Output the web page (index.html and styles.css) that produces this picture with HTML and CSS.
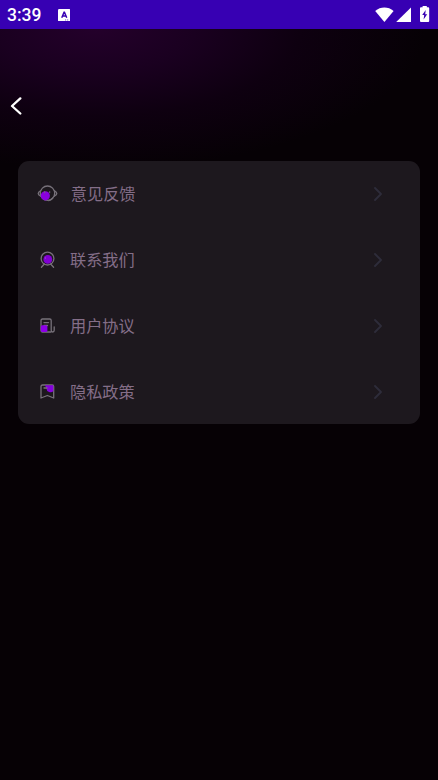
FILE: index.html
```html
<!DOCTYPE html>
<html lang="zh-CN">
<head>
<meta charset="utf-8">
<title>设置</title>
<link rel="stylesheet" href="styles.css">
</head>
<body>
<header class="status">
  <span class="time">3:39</span>
  <svg class="app-badge" viewBox="0 0 12 12"><rect width="12" height="12" rx="1.2" fill="#fff"/><path d="M3.6 8.4 5.8 3h.4l2.2 5.4M4.4 6.8h3.2" fill="none" stroke="#3700b3" stroke-width="1.4"/><path d="M6.8 10.5h1m1 0h1" stroke="#3700b3" stroke-width=".7"/></svg>
  <svg class="signals" viewBox="0 0 56 18" fill="#fff"><path d="M.2 5C5.6.4 13.2.4 18.6 5L9.4 16Z"/><path d="M36 1.4V16H21.2Z"/><path d="M47.6 1.2V0h4.2v1.2h1.4q1 0 1 1v12.9q0 1-1 1H46q-1 0-1-1V2.2q0-1 1-1Z"/><path d="M50.7 4 47.2 9.1h2l-.6 4.3 3.6-5.2h-2Z" fill="#3700b3"/></svg>
</header>
<main class="page">
  <nav class="nav">
    <svg class="back" viewBox="0 0 12 18"><path d="M10.3 1.4 2 9l8.3 7.5" fill="none" stroke="#fff" stroke-width="2.3" stroke-linecap="round" stroke-linejoin="round"/></svg>
  </nav>
  <section class="card">
    <div class="row">
      <svg class="icon" viewBox="0 0 24 24"><g class="line"><circle cx="11.5" cy="11.2" r="7.2"/><path d="M4.8 8.6Q2.2 10 2.2 11.4t2.6 2.8M18.2 8.6q2.6 1.4 2.6 2.8t-2.6 2.8M16.8 16q-1.4 2.5-4 2.7"/></g><circle cx="9.3" cy="13.8" r="4.6" fill="#8a00df"/><path d="M8.7 9.2v2m5-2v2" stroke="#76677d"/></svg>
      <span class="label label-first">意见反馈</span>
      <svg class="arrow" viewBox="0 0 10 16"><path d="m2 2 6 6-6 6"/></svg>
    </div>
    <div class="row">
      <svg class="icon" viewBox="0 0 24 24"><g class="line"><circle cx="11.5" cy="10.6" r="6.4"/><path d="m8.4 16-3 3.2m9.2-3.2 3 3.2"/></g><circle cx="11.8" cy="11.4" r="4.4" fill="#8100d3"/><path d="M9.4 9.5v1" stroke="#b45ee0"/></svg>
      <span class="label">联系我们</span>
      <svg class="arrow" viewBox="0 0 10 16"><path d="m2 2 6 6-6 6"/></svg>
    </div>
    <div class="row">
      <svg class="icon" viewBox="0 0 24 24"><g class="line"><path d="M15 18H6.2Q5 18 5 16.5v-10Q5 5 6.5 5h7.2q1.5 0 1.5 1.5v9.8q0 1.7 1.5 1.7t1.5-1.7v-3.5M8 8.6h4.5M8 11.5h3.5"/></g><rect x="4.8" y="11.3" width="6.6" height="6.6" rx="1.5" fill="#8d00e8"/></svg>
      <span class="label">用户协议</span>
      <svg class="arrow" viewBox="0 0 10 16"><path d="m2 2 6 6-6 6"/></svg>
    </div>
    <div class="row">
      <svg class="icon" viewBox="0 0 24 24"><g class="line"><path d="M5 18v-11.5Q5 5 6.5 5h9.7q1.5 0 1.5 1.5V18l-6.3-2.5Z"/></g><path d="M9 5.3h8.3v6q-1.7 1.6-4.2.8-2.6-.9-2.7-3.6Z" fill="#8500de"/><path class="line" d="M8 8h3"/></svg>
      <span class="label">隐私政策</span>
      <svg class="arrow" viewBox="0 0 10 16"><path d="m2 2 6 6-6 6"/></svg>
    </div>
  </section>
</main>
</body>
</html>
```
FILE: styles.css
```css
* { box-sizing: border-box; }
body {
  margin: 0;
  height: 780px;
  overflow: hidden;
  background: #060105;
  font-family: Roboto, "Noto Sans CJK SC", sans-serif;
}
.status {
  display: flex;
  align-items: center;
  height: 29px;
  padding: 1px 7px 0;
  background: #3700b3;
  color: #fff;
}
.time { width: 50.5px; font-size: 17.5px; font-weight: 500; line-height: 28px; }
.app-badge { width: 12.5px; height: 12.5px; }
.signals { width: 56px; height: 18px; margin-left: auto; }
.page {
  height: 751px;
  padding: 0 18px;
  background: radial-gradient(ellipse 330px 140px at 96px 0, #24002b 0%, #1a0020 30%, #0e0010 62%, #060105 100%);
}
.nav { height: 132px; padding-top: 68px; }
.back { display: block; width: 12px; height: 18px; margin-left: -8px; }
.card {
  height: 263px;
  padding-top: 0.4px;
  border-radius: 11px;
  background: #1d181e;
}
.row {
  display: flex;
  align-items: center;
  height: 65.75px;
  padding: 0 37px 0 18px;
}
.icon { width: 24px; height: 24px; margin-right: 10px; }
.line { fill: none; stroke: #77717a; stroke-width: 1.3; stroke-linecap: round; stroke-linejoin: round; }
.label { padding-top: 2px; color: #846e88; font-size: 16.2px; line-height: 24px; }
.label-first { margin-left: 0.8px; }
.arrow { width: 10px; height: 16px; margin-left: auto; fill: none; stroke: #2e2c3a; stroke-width: 1.9; stroke-linecap: round; stroke-linejoin: round; }
```
